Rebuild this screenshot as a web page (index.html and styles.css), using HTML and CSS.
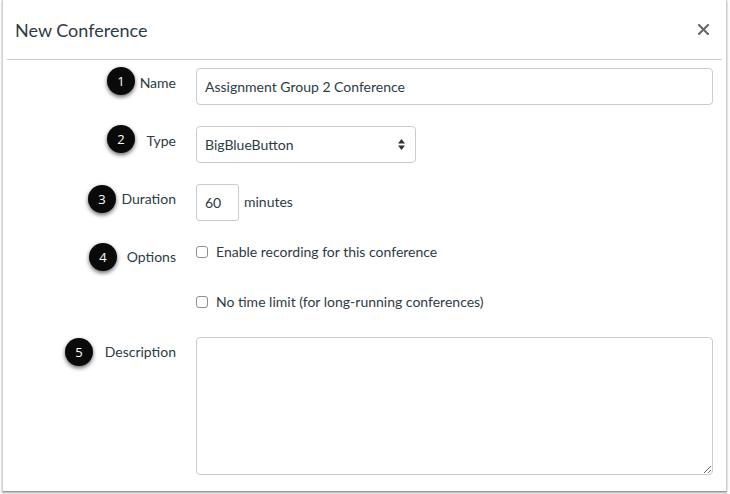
FILE: index.html
```html
<!DOCTYPE html>
<html>
<head>
<meta charset="utf-8">
<link rel="stylesheet" href="styles.css">
</head>
<body>
<div class="dialog">
  <div class="header">
    <h1 class="title">New Conference</h1>
    <button class="close" aria-label="Close">
      <svg width="11" height="11" viewBox="0 0 11 11"><path d="M1 1L10 10M10 1L1 10" stroke="#666" stroke-width="2" stroke-linecap="square"/></svg>
    </button>
  </div>
  <form class="form">
    <label class="label">Name</label>
    <div class="field"><div class="input wide">Assignment Group 2 Conference</div></div>

    <label class="label">Type</label>
    <div class="field">
      <div class="input select">BigBlueButton
        <svg class="arrows" width="7" height="11" viewBox="0 0 7 11"><path d="M3.5 0L7 4.5H0Z M0 6.5H7L3.5 11Z" fill="#333"/></svg>
      </div>
    </div>

    <label class="label">Duration</label>
    <div class="field inline"><div class="input short">60</div><span class="unit">minutes</span></div>

    <label class="label">Options</label>
    <div class="field options">
      <div class="check"><span class="box"></span>Enable recording for this conference</div>
      <div class="check"><span class="box"></span>No time limit (for long-running conferences)</div>
    </div>

    <label class="label">Description</label>
    <div class="field"><textarea class="textarea"></textarea></div>
  </form>
  <span class="badge b1">1</span>
  <span class="badge b2">2</span>
  <span class="badge b3">3</span>
  <span class="badge b4">4</span>
  <span class="badge b5">5</span>
</div>
</body>
</html>
```
FILE: styles.css
```css
* { box-sizing: border-box; }
html, body { margin: 0; padding: 0; background: #fff; }
body {
  font-family: Lato, "Liberation Sans", sans-serif;
  color: #2d3b45;
  font-size: 14px;
  width: 730px;
  height: 494px;
  overflow: hidden;
}
.dialog {
  position: relative;
  margin-left: 2px;
  width: 725px;
  height: 492px;
  border: 1px solid #cfcfcf;
  border-top: none;
  border-bottom-color: #9a9a9a;
  box-shadow: 0 1px 2px rgba(0,0,0,0.35);
  background: #fff;
}
.header {
  height: 60px;
  margin: 0 4px 0 4px;
  border-bottom: 1px solid #c7cdd1;
  display: flex;
  align-items: center;
  justify-content: space-between;
  padding: 0 13px 0 8px;
}
.title {
  margin: 0;
  font-size: 18px;
  font-weight: 400;
  line-height: 24px;
  padding-top: 1px;
  color: #2d3b45;
}
.close {
  border: none;
  background: none;
  padding: 0;
  width: 11px;
  height: 11px;
  display: flex;
}
.form {
  display: grid;
  grid-template-columns: 173px 1fr;
  column-gap: 20px;
  row-gap: 21px;
  padding: 8px 13px 0 0;
}
.label {
  text-align: right;
  padding-top: 5px;
  line-height: 20px;
  font-size: 14px;
}
.field { min-width: 0; }
.input {
  height: 37px;
  border: 1px solid #c7cdd1;
  border-radius: 4px;
  padding: 0 8px;
  display: flex;
  align-items: center;
  font-size: 14px;
  line-height: 20px;
  background: #fff;
}
.select {
  width: 220px;
  justify-content: space-between;
  padding-right: 10px;
  position: relative;
}
.short { width: 43px; border-radius: 3px; }
.inline { display: flex; align-items: center; }
.unit { margin-left: 5px; position: relative; top: -1px; }
.options { padding-bottom: 4px; }
.check {
  display: flex;
  align-items: center;
  line-height: 20px;
  height: 20px;
}
.check + .check { margin-top: 30px; }
.box {
  width: 12px;
  height: 12px;
  border: 1px solid #8f8f8f;
  border-radius: 3px;
  margin-right: 8px;
  background: #fff;
}
.textarea {
  display: block;
  width: 100%;
  height: 138px;
  border: 1px solid #c7cdd1;
  border-radius: 4px;
  font-family: inherit;
  font-size: 14px;
  margin: 0;
  resize: both;
}
.badge {
  position: absolute;
  width: 28px;
  height: 28px;
  border-radius: 50%;
  background: #0a0a0a;
  color: #fff;
  font-family: "Open Sans", "Liberation Sans", sans-serif;
  font-size: 13px;
  line-height: 28px;
  text-align: center;
  box-shadow: 0 2px 4px rgba(0,0,0,0.6);
}
.b1 { left: 104px; top: 67px; }
.b2 { left: 104px; top: 125px; }
.b3 { left: 85px; top: 185px; }
.b4 { left: 86px; top: 243px; }
.b5 { left: 62px; top: 338px; }
```
